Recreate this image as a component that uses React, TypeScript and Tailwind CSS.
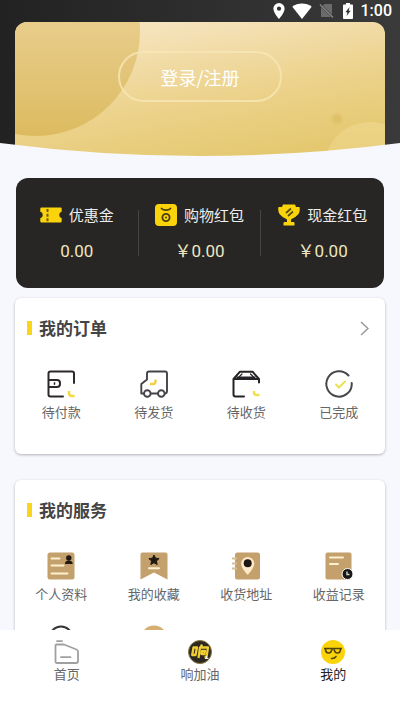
import type { ReactNode } from "react";

const YELLOW = "#fbd30a";

function StatusBar() {
  return (
    <div className="flex h-[22px] items-center justify-end gap-[7px] pr-2 text-white">
      <svg width="12" height="16" viewBox="0 0 12 16" aria-hidden="true">
        <path fill="currentColor" fillRule="evenodd" d="M6 0a5.6 5.6 0 0 0-5.6 5.7C.4 9.7 6 16 6 16s5.600-6.300 5.600-10.300A5.600 5.600 0 0 0 6 0Zm0 3.600a2.100 2.100 0 1 1 0 4.200 2.100 2.100 0 0 1 0-4.200Z" />
      </svg>
      <svg width="20" height="16" viewBox="0 0 20 16" aria-hidden="true">
        <path fill="currentColor" d="M10 16 .3 3.800C3 1.600 6.300.5 10 .5s7 1.100 9.700 3.300Z" />
      </svg>
      <svg width="16" height="16" viewBox="0 0 16 16" aria-hidden="true">
        <path fill="#6b6b6b" d="M5.500 1H13v10.800L3.800 2.700ZM2 4.200 12 14H2Z" />
        <path stroke="#858585" strokeWidth="1.500" d="m1 1.500 13 13" />
      </svg>
      <svg width="12" height="16" viewBox="0 0 12 16" aria-hidden="true">
        <path fill="currentColor" d="M4 0h4v1.500h2.200q.8 0 .8.800v12.900q0 .8-.8.800H1.800q-.8 0-.8-.8V2.300q0-.8.800-.8H4Z" />
        <path fill="#303030" d="M7.600 4 3.400 9.200h2L4.600 13l4-5.200H6.700Z" />
      </svg>
      <span className="font-[Roboto,sans-serif] text-base leading-5 font-medium">1:00</span>
    </div>
  );
}

function Header() {
  return (
    <header className="relative h-[158px] overflow-hidden bg-linear-to-r from-[#222222] to-[#3a3a3a]">
      <StatusBar />
      <div className="relative mx-[15px] flex h-[136px] justify-center overflow-hidden rounded-t-xl bg-linear-170 from-[#f5e3bb] from-15% via-[#ecd28b] via-55% to-[#e2c566] pt-[29px]">
        <span className="absolute -top-[95px] -left-[84px] size-[209px] rounded-full bg-linear-to-b from-[#e8cd8b] from-45% to-[#dcbb5f]" />
        <span className="absolute top-[92px] right-[43px] size-2.5 rounded-full bg-[#dfc167] blur-[1px]" />
        <span className="absolute top-[100px] -right-[31px] size-[92px] rounded-full bg-linear-to-b from-[#ecd386] to-[#e5c96f]" />
        <button type="button" className="relative h-[51px] w-[164px] rounded-full border-2 border-[#f7e6b5]/80 text-lg text-white">
          登录/注册
        </button>
      </div>
      <svg className="absolute inset-x-0 bottom-0 h-[15px] w-full" viewBox="0 0 400 15" preserveAspectRatio="none" aria-hidden="true">
        <path fill="#f7f8fd" d="M0 0Q200 26 400 0V15H0Z" />
      </svg>
    </header>
  );
}

function TicketIcon() {
  return (
    <svg width="22" height="16" viewBox="0 0 22 16" aria-hidden="true">
      <path fill={YELLOW} d="M1.500.5h19q1.200 0 1.200 1.200V4.800a3.300 3.300 0 0 0 0 6.400v3.100q0 1.200-1.200 1.200h-19Q.3 15.500.3 14.300V11.200a3.300 3.300 0 0 0 0-6.400V1.700Q.3.500 1.500.5Z" />
      <path stroke="#6b5b15" strokeWidth="2" d="M7.500 2v3M7.500 6.700v3M7.500 11.300v3" />
    </svg>
  );
}

function PacketIcon() {
  return (
    <svg width="22" height="22" viewBox="0 0 22 22" fill="none" aria-hidden="true">
      <rect width="22" height="22" rx="4" fill={YELLOW} />
      <path stroke="#4b400c" strokeWidth="1.800" strokeLinecap="round" d="M6.500 4.500c2 2.200 7 2.200 9 0" />
      <circle cx="11" cy="13.500" r="3.600" stroke="#4b400c" strokeWidth="1.900" />
      <circle cx="11" cy="13.500" r="1" fill="#4b400c" />
    </svg>
  );
}

function TrophyIcon() {
  return (
    <svg width="22" height="22" viewBox="0 0 22 22" aria-hidden="true">
      <path fill={YELLOW} d="M5 .5h12l1 2.500h3.500q.9 3.500-1 7-2.500 3-6 4.500l-1.500 1v2.500h2.500q1 0 1 1v2.500h-11V19q0-1 1-1H9v-2.500l-1.500-1q-3.500-1.500-6-4.500-1.900-3.500-1-7H4Z" />
      <path stroke="#5c4d10" strokeWidth="1.700" d="m8 9 5-4.500M10 12l5-4.500" />
    </svg>
  );
}

const balances = [
  { label: "优惠金", value: "0.00", icon: <TicketIcon /> },
  { label: "购物红包", value: "￥0.00", icon: <PacketIcon /> },
  { label: "现金红包", value: "￥0.00", icon: <TrophyIcon /> },
];

function Balances() {
  return (
    <section className="mx-4 mt-5 grid h-[110px] grid-cols-3 items-center rounded-xl bg-[#272624]">
      {balances.map((b, i) => (
        <div key={b.label} className={i < 2 ? "flex h-[46px] flex-col items-center justify-center border-r border-[#464543]" : "flex h-[46px] flex-col items-center justify-center"}>
          <div className="flex h-6 items-center gap-[7px] text-[15px] leading-6 whitespace-nowrap text-[#eeeeee]">
            {b.icon}
            {b.label}
          </div>
          <div className="mt-3 font-[Roboto,'Noto_Sans_CJK_SC',sans-serif] text-[17px] leading-6 text-[#eee6c0]">{b.value}</div>
        </div>
      ))}
    </section>
  );
}

function WalletIcon() {
  return (
    <svg width="28" height="28" viewBox="0 0 28 28" fill="none" strokeLinecap="round" strokeLinejoin="round" aria-hidden="true">
      <path stroke="#2d2928" strokeWidth="2" d="M27 13V3.500Q27 1.500 25 1.500H3.500q-2 0-2 2v21q0 2 2 2H16M1.500 10H10q3 0 3 3v1q0 3-3 3H1.500" />
      <path stroke="#2d2928" strokeWidth="1.500" d="M7.500 12.800v1.500" />
      <path stroke="#f6d83c" strokeWidth="2.400" strokeLinecap="butt" d="M22 21v2q0 3 3 3h2.500" />
    </svg>
  );
}

function TruckIcon() {
  return (
    <svg width="28" height="28" viewBox="0 0 28 28" fill="none" strokeLinecap="round" strokeLinejoin="round" aria-hidden="true">
      <g stroke="#454349" strokeWidth="1.900">
        <path d="M3.500 23.500H1.300V14L7 9.500V3.500q0-2 2-2h16q2 0 2 2V21q0 2.500-2 2.500M11 23.500h7" />
        <circle cx="7.300" cy="23.500" r="3.300" />
        <circle cx="21.300" cy="23.500" r="3.300" />
      </g>
      <path stroke="#f3cf47" strokeWidth="2.400" strokeLinecap="butt" d="M15.500 9.500v2q0 2.500-2.500 2.500h-3" />
    </svg>
  );
}

function BoxIcon() {
  return (
    <svg width="28" height="28" viewBox="0 0 28 28" fill="none" strokeLinecap="round" strokeLinejoin="round" aria-hidden="true">
      <path stroke="#252326" strokeWidth="2" d="M12 26.500H3.500q-2 0-2-2V9L8 1.700h12.500L27 9v3.500M1.500 9H27M5.500 7.500h17" />
      <path stroke="#252326" strokeWidth="1.200" d="m7 7 3-3M21.500 7l-3-3" />
      <path stroke="#eee14b" strokeWidth="2.400" strokeLinecap="butt" d="M22 21v1.500q0 2.500 2.500 2.500h3" />
    </svg>
  );
}

function DoneIcon() {
  return (
    <svg width="28" height="28" viewBox="0 0 28 28" fill="none" strokeLinecap="round" aria-hidden="true">
      <path stroke="#47454a" strokeWidth="2" d="M23.500 5.500A12.700 12.700 0 1 0 26.700 13" />
      <path stroke="#ece150" strokeWidth="2" d="m11 14.500 3 3 6-6" />
    </svg>
  );
}

function ProfileIcon() {
  return (
    <svg width="28" height="28" viewBox="0 0 28 28" fill="none" aria-hidden="true">
      <rect x=".5" y=".5" width="27" height="27" rx="2.500" fill="#c4a06c" />
      <path stroke="#fff0cf" strokeWidth="2" strokeLinecap="round" d="M4.500 6.500h8M4.500 13.500h12M4.500 21.500h16" />
      <circle cx="21.800" cy="6" r="2.700" fill="#21180f" />
      <path fill="#21180f" d="M18 12V10.500q1-2 3.800-2t3.700 2V12Z" />
    </svg>
  );
}

function FavoriteIcon() {
  return (
    <svg width="28" height="28" viewBox="0 0 28 28" fill="none" aria-hidden="true">
      <path fill="#c4a06c" d="M2.500.5h23q2 0 2 2v25L14 20.500.5 27.500v-25q0-2 2-2Z" />
      <path fill="#21180f" stroke="#21180f" strokeLinejoin="round" d="m14 3 1.500 3.200 3.600.4-2.700 2.400.8 3.500L14 10.700l-3.200 1.800.8-3.500-2.700-2.400 3.600-.4Z" />
      <path stroke="#fff0cf" strokeWidth="2" strokeLinecap="round" d="M9 16.300h10" />
    </svg>
  );
}

function AddressIcon() {
  return (
    <svg width="28" height="28" viewBox="0 0 28 28" fill="none" aria-hidden="true">
      <rect x="3" y=".5" width="25" height="27" rx="2.500" fill="#c4a06c" />
      <path stroke="#d7bd93" strokeWidth="2" d="M0 6.500h5M0 11.500h5M0 16.500h5" />
      <path fill="#ffe9c8" d="M15.700 5a6.600 6.600 0 0 0-6.600 6.600c0 4.600 6.600 11.400 6.600 11.400s6.600-6.800 6.600-11.400A6.600 6.600 0 0 0 15.700 5Z" />
      <circle cx="15.700" cy="11.300" r="4" fill="#1c1713" />
    </svg>
  );
}

function RecordIcon() {
  return (
    <svg width="28" height="28" viewBox="0 0 28 28" fill="none" aria-hidden="true">
      <rect x=".5" y=".5" width="26" height="27" rx="2" fill="#c4a06c" />
      <path stroke="#fff0cf" strokeWidth="2" strokeLinecap="round" d="M5 5.500h13M5 12h8" />
      <circle cx="22.500" cy="22" r="5.500" fill="#191817" stroke="#fff" />
      <path stroke="#d8d5cf" strokeWidth="1.400" d="M22 19.500v3h2.500" />
    </svg>
  );
}

function SupportIcon() {
  return (
    <svg width="28" height="28" viewBox="0 0 28 28" fill="none" aria-hidden="true">
      <circle cx="14" cy="13" r="11.500" stroke="#353535" strokeWidth="2" />
    </svg>
  );
}

function CoinIcon() {
  return (
    <svg width="28" height="28" viewBox="0 0 28 28" aria-hidden="true">
      <circle cx="14" cy="14" r="13.500" fill="#d5ae72" />
    </svg>
  );
}

type Item = { label: string; icon: ReactNode };

const orders: Item[] = [
  { label: "待付款", icon: <WalletIcon /> },
  { label: "待发货", icon: <TruckIcon /> },
  { label: "待收货", icon: <BoxIcon /> },
  { label: "已完成", icon: <DoneIcon /> },
];

const services: Item[] = [
  { label: "个人资料", icon: <ProfileIcon /> },
  { label: "我的收藏", icon: <FavoriteIcon /> },
  { label: "收货地址", icon: <AddressIcon /> },
  { label: "收益记录", icon: <RecordIcon /> },
  { label: "", icon: <SupportIcon /> },
  { label: "", icon: <CoinIcon /> },
];

function Panel({ title, items, action }: { title: string; items: Item[]; action?: ReactNode }) {
  return (
    <section className="mx-[15px] rounded-md bg-white pb-8 shadow-[0_1px_3px_rgba(0,0,0,0.28)]">
      <div className="flex h-[60px] items-center justify-between px-3">
        <h2 className="flex items-center gap-[7px] text-[17px] leading-6 font-bold text-[#444444]">
          <span className="h-3.5 w-[5px] bg-[#fbd51b]" />
          {title}
        </h2>
        {action}
      </div>
      <div className="grid grid-cols-4 gap-y-[21px] pt-3">
        {items.map((item, i) => (
          <button key={i} type="button" className="flex flex-col items-center gap-1 text-[13px] leading-5 text-[#666666]">
            {item.icon}
            {item.label}
          </button>
        ))}
      </div>
    </section>
  );
}

function NavHomeIcon() {
  return (
    <svg width="26" height="24" viewBox="0 0 26 24" fill="none" stroke="#a0a0a0" strokeWidth="1.800" strokeLinejoin="round" strokeLinecap="round" aria-hidden="true">
      <path d="M3 1.200h5M2.500 4.500H10l12.500 5q1.500.7 1.500 2v9.500q0 2-2 2H3q-1.500 0-1.500-1.500v-16q0-1 1-1ZM7 17.200h9.500" />
    </svg>
  );
}

function NavFuelIcon() {
  return (
    <svg width="24" height="24" viewBox="0 0 24 24" fill="none" aria-hidden="true">
      <circle cx="12" cy="12" r="11.500" fill="#2c2822" stroke="#8b7a45" />
      <g stroke="#f1cf32" strokeWidth="2.300" strokeLinejoin="round">
        <path d="M5.500 7.500h3.500L7.500 15H4.200ZM14 4.500l-1.300 3M10.500 18 12 7.500h8L18.500 17h-2M14 11h3l-.6 3h-2.900Z" />
      </g>
      <path stroke="#f7f2dc" strokeWidth="1.200" d="M17 18.500h3.500M18.500 16v3" />
    </svg>
  );
}

function NavMineIcon() {
  return (
    <svg width="24" height="24" viewBox="0 0 24 24" fill="none" aria-hidden="true">
      <circle cx="12" cy="12" r="12" fill="#fbd30a" />
      <path stroke="#51440d" strokeWidth="1.700" strokeLinejoin="round" d="M3 8.500h18M4.500 8.500q0 4.500 3 4.500t3.500-4.500M13 8.500q.5 4.500 3.500 4.500t3-4.500" />
      <path stroke="#51440d" strokeWidth="1.500" strokeLinecap="round" d="M10.500 18.500q3 .3 4.500-2" />
    </svg>
  );
}

function BottomNav() {
  return (
    <nav className="grid h-20 shrink-0 grid-cols-3 bg-white pt-2.5 text-[#666666]">
      <button type="button" className="flex flex-col items-center text-[13px] leading-5">
        <NavHomeIcon />
        首页
      </button>
      <button type="button" className="flex flex-col items-center text-[13px] leading-5">
        <NavFuelIcon />
        响加油
      </button>
      <button type="button" aria-current="page" className="flex flex-col items-center text-[13px] leading-5 text-[#222222]">
        <NavMineIcon />
        我的
      </button>
    </nav>
  );
}

export default function App() {
  return (
    <div className="flex h-screen flex-col overflow-hidden bg-[#f7f8fd] font-['Noto_Sans_CJK_SC',sans-serif]">
      <main className="min-h-0 flex-1 overflow-hidden">
        <Header />
        <Balances />
        <div className="mt-2.5 flex flex-col gap-[26px]">
          <Panel
            title="我的订单"
            items={orders}
            action={
              <button type="button" aria-label="我的订单" className="pr-1">
                <svg width="9" height="15" viewBox="0 0 9 15" fill="none" stroke="#999999" strokeWidth="1.500" aria-hidden="true">
                  <path d="m1 1 7 6.500-7 6.500" />
                </svg>
              </button>
            }
          />
          <Panel title="我的服务" items={services} />
        </div>
      </main>
      <BottomNav />
    </div>
  );
}
